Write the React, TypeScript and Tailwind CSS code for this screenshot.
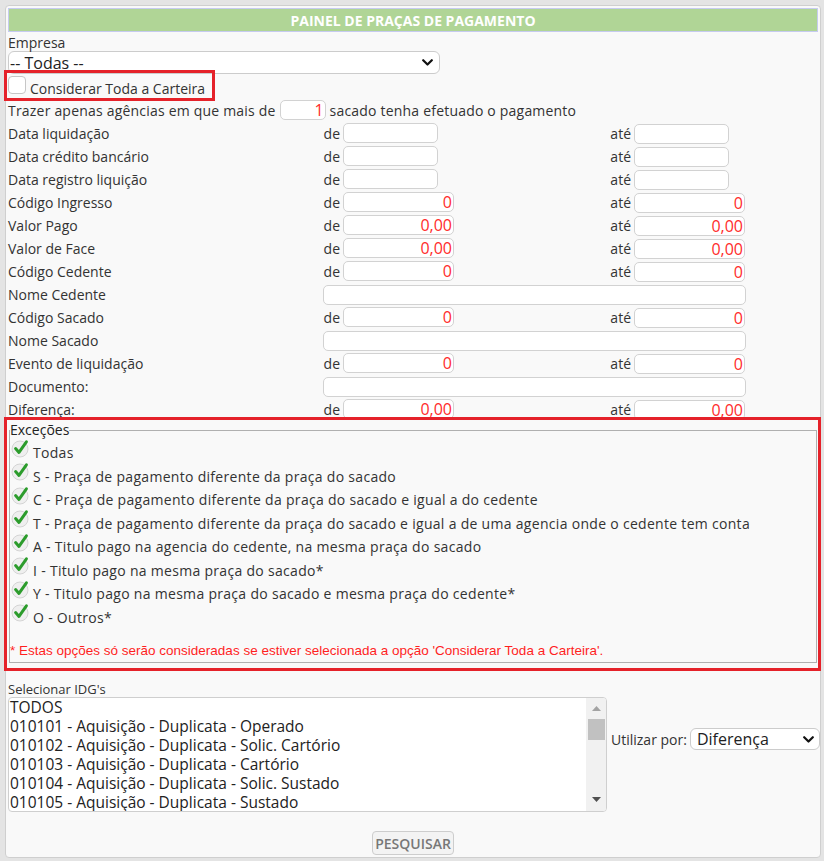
import React from 'react';

type RowKind = 'date' | 'num' | 'text';

interface FilterRow {
  label: string;
  kind: RowKind;
  value?: string;
}

const rows: FilterRow[] = [
  { label: 'Data liquidação', kind: 'date' },
  { label: 'Data crédito bancário', kind: 'date' },
  { label: 'Data registro liquição', kind: 'date' },
  { label: 'Código Ingresso', kind: 'num', value: '0' },
  { label: 'Valor Pago', kind: 'num', value: '0,00' },
  { label: 'Valor de Face', kind: 'num', value: '0,00' },
  { label: 'Código Cedente', kind: 'num', value: '0' },
  { label: 'Nome Cedente', kind: 'text' },
  { label: 'Código Sacado', kind: 'num', value: '0' },
  { label: 'Nome Sacado', kind: 'text' },
  { label: 'Evento de liquidação', kind: 'num', value: '0' },
  { label: 'Documento:', kind: 'text' },
  { label: 'Diferença:', kind: 'num', value: '0,00' },
];

const excecoes = [
  'Todas',
  'S - Praça de pagamento diferente da praça do sacado',
  'C - Praça de pagamento diferente da praça do sacado e igual a do cedente',
  'T - Praça de pagamento diferente da praça do sacado e igual a de uma agencia onde o cedente tem conta',
  'A - Titulo pago na agencia do cedente, na mesma praça do sacado',
  'I - Titulo pago na mesma praça do sacado*',
  'Y - Titulo pago na mesma praça do sacado e mesma praça do cedente*',
  'O - Outros*',
];

const idgs = [
  'TODOS',
  '010101 - Aquisição - Duplicata - Operado',
  '010102 - Aquisição - Duplicata - Solic. Cartório',
  '010103 - Aquisição - Duplicata - Cartório',
  '010104 - Aquisição - Duplicata - Solic. Sustado',
  '010105 - Aquisição - Duplicata - Sustado',
];

function Chevron() {
  return (
    <svg width="11" height="7" viewBox="0 0 11 7" className="shrink-0">
      <path d="M1.2 1.2 L5.5 5.5 L9.8 1.2" fill="none" stroke="#111" strokeWidth="2.2" strokeLinecap="round" strokeLinejoin="round" />
    </svg>
  );
}

function CheckIcon() {
  return (
    <svg width="19" height="19" viewBox="0 0 19 19" className="mb-[9px] ml-[1px] shrink-0">
      <circle cx="9" cy="10" r="8" fill="#efefef" stroke="#d4d4d4" />
      <path d="M4.6 9.6 L8 13.4 L15.4 2.8" fill="none" stroke="#2c9c2c" strokeWidth="3" strokeLinecap="round" strokeLinejoin="round" />
    </svg>
  );
}

function Field({ width, value = '' }: { width: string; value?: string }) {
  return (
    <input
      readOnly
      value={value}
      className={`${width} h-[20px] rounded-[5px] border border-[#d2d2d2] bg-white pr-[1px] text-right text-[16px] tracking-normal text-[#ff2b2b] outline-none`}
    />
  );
}

function Row({ row }: { row: FilterRow }) {
  return (
    <div className="flex h-[23px] items-center">
      <div className="w-[315px]">{row.label}</div>
      {row.kind === 'text' ? (
        <Field width="w-[423px]" />
      ) : (
        <>
          <div className="w-[20px] pr-[3px] text-right">de</div>
          <div className="w-[267px]">
            <Field width={row.kind === 'date' ? 'w-[95px]' : 'w-[111px]'} value={row.value} />
          </div>
          <div className="w-[24px] pr-[3px] text-right">até</div>
          <Field width={row.kind === 'date' ? 'w-[95px]' : 'w-[111px]'} value={row.value} />
        </>
      )}
    </div>
  );
}

export default function App() {
  return (
    <div className="min-h-[861px] bg-[#e4e4e4] pt-[5px] pr-[3px] pb-[3px] pl-[5px] font-['Open_Sans',sans-serif] text-[14px] text-[#333]">
      <div className="rounded-[4px] border border-[#cfcfcf] bg-[#f9f9f9] px-[2px] py-[2px]">
        {/* Title bar */}
        <div className="flex h-[24px] items-center justify-center border border-[#c6cbf0] bg-[#b0d596] text-[14px] font-bold text-white">
          PAINEL DE PRAÇAS DE PAGAMENTO
        </div>

        {/* Empresa */}
        <div className="pt-[3px] leading-[16px]">Empresa</div>
        <div className="flex h-[23px] w-[432px] items-center justify-between rounded-[6px] border border-[#cccccc] bg-white pr-[6px] pl-[1px] text-[16px] text-[#222]">
          <span>-- Todas --</span>
          <Chevron />
        </div>

        {/* Considerar toda a carteira */}
        <div className="relative flex h-[25px] items-start">
          <span className="mt-[2px] h-[18px] w-[18px] rounded-[4px] border border-[#c6c6c6] bg-white" />
          <span className="mt-[7px] ml-[4px] leading-[16px]">Considerar Toda a Carteira</span>
          <div className="pointer-events-none absolute top-[-4px] left-[-4px] h-[31px] w-[211px] border-[3px] border-[#e5222a]" />
        </div>

        <div className="flex h-[23px] items-center tracking-[0.2px]">
          <span>Trazer apenas agências em que mais de</span>
          <span className="mx-[4px]">
            <Field width="w-[46px]" value="1" />
          </span>
          <span>sacado tenha efetuado o pagamento</span>
        </div>

        {rows.map((row) => (
          <Row key={row.label} row={row} />
        ))}

        {/* Exceções */}
        <div className="relative">
          <fieldset className="mx-[1px] border border-[#b0b0b0] pb-[3px]">
            <legend className="leading-[18px] text-[#222]">Exceções</legend>
            <div className="pt-[2px] tracking-[0.3px]">
              {excecoes.map((item) => (
                <div key={item} className="flex h-[23.5px] items-center">
                  <CheckIcon />
                  <span className="ml-[3px] whitespace-nowrap">{item}</span>
                </div>
              ))}
            </div>
            <div className="mt-[14px] font-['Liberation_Sans',Arial,sans-serif] text-[13.5px] leading-[16px] text-[#ff1f1f]">
              * Estas opções só serão consideradas se estiver selecionada a opção 'Considerar Toda a Carteira'.
            </div>
          </fieldset>
          <div className="pointer-events-none absolute top-[-4px] left-[-4px] h-[254px] w-[817px] border-[3px] border-[#e5222a]" />
        </div>

        {/* IDG's */}
        <div className="mt-[18px] text-[13px] leading-[16px]">Selecionar IDG's</div>
        <div className="flex items-start">
          <div className="flex h-[115px] w-[599px] shrink-0 overflow-hidden rounded-[4px] border border-[#cfcfcf] bg-white">
            <div className="flex-1 pl-[1px] text-[15.5px] leading-[19px] text-[#222]">
              {idgs.map((idg) => (
                <div key={idg} className="h-[19px] whitespace-nowrap">
                  {idg}
                </div>
              ))}
            </div>
            <div className="flex w-[20px] flex-col items-center bg-[#f1f1f1]">
              <svg width="9" height="5" viewBox="0 0 9 5" className="mt-[8px]">
                <polygon points="0,5 4.5,0 9,5" fill="#a3a3a3" />
              </svg>
              <div className="mt-[8px] h-[21px] w-[17px] bg-[#c1c1c1]" />
              <div className="flex-1" />
              <svg width="9" height="5" viewBox="0 0 9 5" className="mb-[9px]">
                <polygon points="0,0 9,0 4.5,5" fill="#505050" />
              </svg>
            </div>
          </div>
          <div className="mt-[31px] ml-[4px] flex shrink-0 items-center">
            <span className="whitespace-nowrap">Utilizar por:</span>
            <div className="ml-[3px] flex h-[22px] w-[130px] shrink-0 items-center justify-between rounded-[6px] border border-[#cccccc] bg-white pr-[5px] pl-[6px] text-[16px] text-[#222]">
              <span>Diferença</span>
              <Chevron />
            </div>
          </div>
        </div>

        <div className="mt-[19px] flex justify-center">
          <button className="h-[24px] w-[82px] rounded-[4px] border border-[#cdcdcd] bg-[#f3f3f3] text-[14px] font-semibold text-[#777]">
            PESQUISAR
          </button>
        </div>
      </div>
    </div>
  );
}
